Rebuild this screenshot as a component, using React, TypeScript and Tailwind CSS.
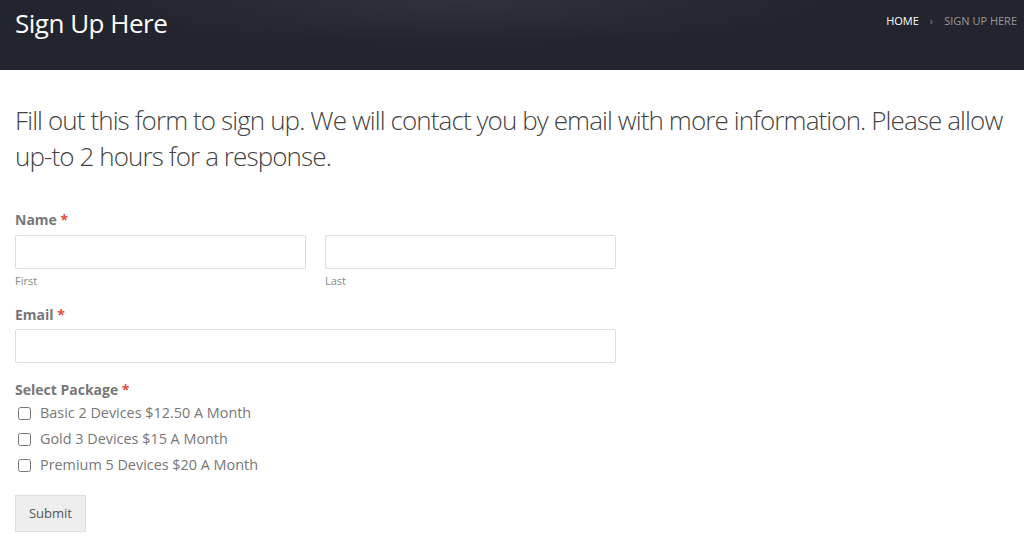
import React from "react";

const PACKAGES = [
  "Basic 2 Devices $12.50 A Month",
  "Gold 3 Devices $15 A Month",
  "Premium 5 Devices $20 A Month",
];

function Label({ children }: { children: React.ReactNode }) {
  return (
    <div className="text-[14px] font-bold leading-[20px] text-[#777]">
      {children} <span className="text-[#e74c3c]">*</span>
    </div>
  );
}

export default function App() {
  return (
    <div className="min-h-[540px] bg-white font-['Open_Sans',sans-serif]">
      {/* Page title bar */}
      <header className="flex h-[70px] items-start justify-between bg-[#23252e] bg-[radial-gradient(ellipse_at_45%_0%,#2f323b_0%,#23252e_45%)] pl-[15px] pr-[7px]">
        <h1 className="pt-[6px] text-[26px] leading-[34px] tracking-[-0.5px] text-white">
          Sign Up Here
        </h1>
        <nav className="flex items-center gap-[11px] pt-[13px] text-[11px] leading-[16px]">
          <span className="text-white">HOME</span>
          <span className="text-[#888]">›</span>
          <span className="text-[#999]">SIGN UP HERE</span>
        </nav>
      </header>

      <main className="px-[15px] pt-[32px]">
        <p className="text-[26px] font-light leading-[36px] tracking-[-0.9px] text-[#444]">
          Fill out this form to sign up. We will contact you by email with more information. Please allow
          up-to 2 hours for a response.
        </p>

        <form className="mt-[36px] w-[601px]">
          <Label>Name</Label>
          <div className="mt-[5px] grid grid-cols-2 gap-[19px]">
            <div>
              <input className="block h-[34px] w-full rounded-[2px] border border-[#ddd] bg-white" />
              <div className="mt-[4px] text-[11px] leading-[16px] text-[#888]">First</div>
            </div>
            <div>
              <input className="block h-[34px] w-full rounded-[2px] border border-[#ddd] bg-white" />
              <div className="mt-[4px] text-[11px] leading-[16px] text-[#888]">Last</div>
            </div>
          </div>

          <div className="mt-[16px]">
            <Label>Email</Label>
            <input className="mt-[4px] block h-[34px] w-full rounded-[2px] border border-[#ddd] bg-white" />
          </div>

          <div className="mt-[17px]">
            <Label>Select Package</Label>
            <div className="flex flex-col">
              {PACKAGES.map((p) => (
                <label key={p} className="flex h-[26px] items-center gap-[9px] text-[14.4px] text-[#777]">
                  <input type="checkbox" className="m-0 ml-[3px] h-[13px] w-[13px]" />
                  {p}
                </label>
              ))}
            </div>
          </div>

          <button
            type="button"
            className="mt-[17px] h-[37px] w-[71px] border border-[#ddd] bg-[#eee] text-[13px] text-[#555]"
          >
            Submit
          </button>
        </form>
      </main>
    </div>
  );
}
